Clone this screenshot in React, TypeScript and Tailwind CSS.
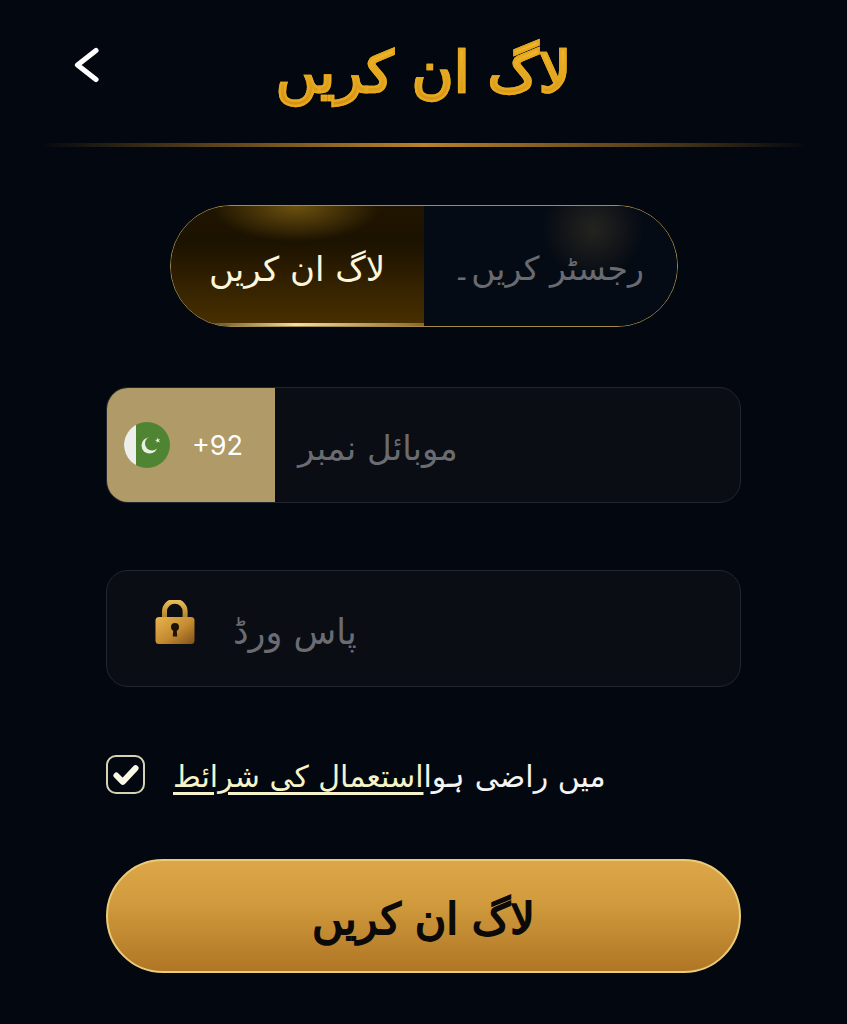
import React from "react";

const urdu = "font-['DejaVu_Sans',sans-serif]";

function PakistanFlag() {
  return (
    <svg viewBox="0 0 46 46" className="h-[46px] w-[46px] shrink-0">
      <defs>
        <clipPath id="flag-circle">
          <circle cx="23" cy="23" r="23" />
        </clipPath>
      </defs>
      <g clipPath="url(#flag-circle)">
        <rect width="46" height="46" fill="#4f8433" />
        <rect width="12" height="46" fill="#eeeeea" />
      </g>
      {/* crescent: pale disc with a green disc over it */}
      <circle cx="25.5" cy="23.5" r="8" fill="#e8f0e0" />
      <circle cx="28" cy="21.5" r="7" fill="#4f8433" />
      <path d="M33.5 15.5l.7 1.9 2-.3-1.3 1.5 1 1.8-1.9-.8-1.4 1.4.2-2-1.9-.9 2-.4z" fill="#e8f0e0" />
    </svg>
  );
}

function GoldLock() {
  return (
    <svg viewBox="0 0 40 44" className="mt-[-14px] h-[44px] w-[40px] shrink-0">
      <defs>
        <linearGradient id="lock-body" x1="0" y1="0" x2="1" y2="1">
          <stop offset="0" stopColor="#e7b54f" />
          <stop offset="0.55" stopColor="#c48a30" />
          <stop offset="1" stopColor="#7f521b" />
        </linearGradient>
        <linearGradient id="lock-shackle" x1="0" y1="0" x2="0" y2="1">
          <stop offset="0" stopColor="#e9bb57" />
          <stop offset="1" stopColor="#b07f2a" />
        </linearGradient>
      </defs>
      <path d="M9.5 18v-6.5a10.3 10.3 0 0 1 20.6 0V18" fill="none" stroke="url(#lock-shackle)" strokeWidth="5" />
      <rect x="0.5" y="17" width="39" height="27" rx="3.5" fill="url(#lock-body)" />
      <circle cx="20" cy="27" r="4" fill="#1d1206" />
      <path d="M18.4 28h3.2l.6 8.5h-4.4z" fill="#1d1206" />
    </svg>
  );
}

export default function App() {
  return (
    <div className={`flex h-[1024px] w-[847px] flex-col overflow-hidden bg-[#03070f] ${urdu}`}>
      {/* top bar */}
      <header className="relative flex h-[143px] shrink-0 items-start justify-center pt-[32px]">
        <button type="button" className="absolute left-[73px] top-[47px]" aria-label="back">
          <svg viewBox="0 0 28 36" className="h-[36px] w-[28px]">
            <path d="M23 3.5L4.5 18L23 32.5" fill="none" stroke="#ffffff" strokeWidth="5.2" strokeLinecap="round" strokeLinejoin="round" />
          </svg>
        </button>
        <h1
          dir="rtl"
          className="bg-gradient-to-b from-[#f7c531] to-[#d08c12] bg-clip-text text-[57px] font-normal leading-[80px] text-transparent [-webkit-text-stroke:2.4px_#e6a81e]"
        >
          لاگ ان کریں
        </h1>
      </header>
      <div className="mx-auto h-[4px] w-[770px] shrink-0 bg-[linear-gradient(90deg,transparent,#57401a_22%,#b9822c_50%,#57401a_78%,transparent)]" />

      {/* tabs */}
      <div className="relative mx-auto mt-[58px] flex h-[122px] w-[508px] shrink-0 overflow-hidden rounded-full border-[1.5px] border-[#a58a4c]">
        <div className="relative flex w-[253px] items-center justify-center bg-[linear-gradient(180deg,#1f1500_0%,#1c1200_30%,#4a3000_100%)]">
          <div className="absolute left-[40px] top-0 h-[36px] w-[170px] bg-[radial-gradient(ellipse_at_50%_0%,#6d510f_0%,transparent_70%)]" />
          <div className="absolute bottom-0 left-[20px] right-0 h-[3px] bg-[linear-gradient(90deg,transparent,#f2dfa6_45%,#8a6a20)]" />
          <span dir="rtl" className="relative mt-[6px] text-[34px] leading-[40px] text-[#fbf6dc]">
            لاگ ان کریں
          </span>
        </div>
        <div className="relative flex flex-1 items-center justify-center bg-[#050b14] pr-[4px]">
          <div className="absolute right-[24px] top-[-22px] h-[90px] w-[120px] bg-[radial-gradient(circle,#24231f_0%,transparent_68%)]" />
          <span dir="rtl" className="relative mt-[6px] text-[33px] leading-[40px] text-[#696b71]">
            رجسٹر کریں۔
          </span>
        </div>
      </div>

      {/* phone */}
      <div className="mx-auto mt-[60px] flex h-[116px] w-[635px] shrink-0 overflow-hidden rounded-[22px] border border-[#22262f] bg-[#0a0d13]">
        <div className="-my-px -ml-px flex w-[169px] shrink-0 items-center gap-[22px] bg-[#b09b68] pl-[18px]">
          <PakistanFlag />
          <span className="font-['Inter',sans-serif] text-[27px] leading-none text-white">+92</span>
        </div>
        <div className="flex flex-1 items-center pl-[23px]">
          <span dir="rtl" className="mt-[6px] text-[34px] leading-[40px] text-[#6a6c72]">
            موبائل نمبر
          </span>
        </div>
      </div>

      {/* password */}
      <div className="mx-auto mt-[67px] flex h-[117px] w-[635px] shrink-0 items-center gap-[38px] rounded-[22px] border border-[#22262f] bg-[#0a0d13] pl-[48px]">
        <GoldLock />
        <span dir="rtl" className="mt-[6px] text-[35px] leading-[40px] text-[#6a6c72]">
          پاس ورڈ
        </span>
      </div>

      {/* terms */}
      <div className="mx-auto mt-[68px] flex h-[39px] w-[635px] shrink-0 items-center gap-[28px]">
        <div className="flex h-[39px] w-[39px] shrink-0 items-center justify-center rounded-[10px] border-2 border-[#d6d3b4]">
          <svg viewBox="0 0 28 24" className="h-[22px] w-[26px]">
            <path d="M3.5 12.5L10.5 19.5L24.5 4.5" fill="none" stroke="#fbf8e6" strokeWidth="6.4" strokeLinejoin="round" strokeLinecap="round" />
          </svg>
        </div>
        <p dir="rtl" className="mt-[4px] text-[30px] leading-[39px] text-[#f4f4f4]">
          میں راضی ہوا
          <span className="text-[#f6f3c8] underline decoration-[3px] underline-offset-[5px]">استعمال کی شرائط</span>
        </p>
      </div>

      {/* submit */}
      <button
        type="button"
        className="mx-auto mt-[65px] flex h-[114px] w-[635px] shrink-0 items-center justify-center rounded-full border-2 border-[#eccb78] bg-[linear-gradient(180deg,#dca748_0%,#d29c3e_35%,#b07625_100%)]"
      >
        <span dir="rtl" className="mt-[6px] text-[43px] leading-[60px] text-[#0b0a08] [-webkit-text-stroke:1.8px_#0b0a08]">
          لاگ ان کریں
        </span>
      </button>
    </div>
  );
}
